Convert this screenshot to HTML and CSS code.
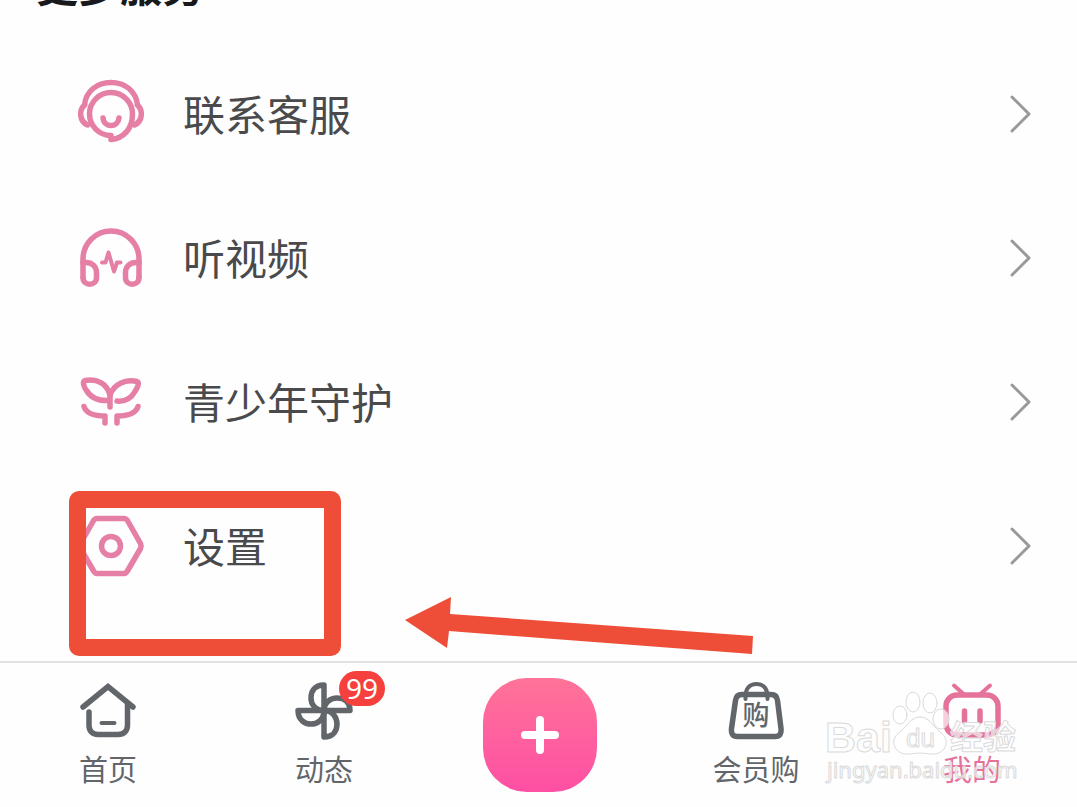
FILE: index.html
```html
<!DOCTYPE html>
<html lang="zh-CN">
<head>
  <meta charset="UTF-8">
  <meta name="viewport" content="width=device-width, initial-scale=1.0">
  <title>我的</title>
  <link rel="stylesheet" href="styles.css">
</head>
<body>
  <main class="services">
    <h2 class="services-title">更多服务</h2>
    <ul class="menu">
      <li class="menu-item">
        <a href="#" class="menu-link">
          <svg class="menu-icon" viewBox="0 0 72 72">
            <path d="M36 61.5v-4a21.5 21.5 0 1 1 21.5-21c0 14-9 24-21.5 25"/>
            <path d="M9.500 27C11 13 22 4.500 36 4.500S61 13 62.500 27"/>
            <path d="M9.500 27C4 32 4 43 12.500 47"/>
            <path d="M62.500 27C68 32 68 43 59.500 47"/>
            <path d="M28 40c1 10 15 10 16 0"/>
          </svg>
          <span class="menu-text">联系客服</span>
          <svg class="chevron" viewBox="0 0 24 40"><path d="M4 3l17 17L4 37"/></svg>
        </a>
      </li>
      <li class="menu-item">
        <a href="#" class="menu-link">
          <svg class="menu-icon" viewBox="0 0 72 72">
            <path d="M8 55V37a28 28 0 0 1 56 0v18"/>
            <path d="M8 40.500h3c6 0 10.500 4 10.500 10v5c0 9-13.500 9-13.500 0"/>
            <path d="M64 40.500h-3c-6 0-10.500 4-10.500 10v5c0 9 13.500 9 13.500 0"/>
            <path d="M27 40.500h3.500l3-10L39 49.500l3-9h3.500" stroke-width="4"/>
          </svg>
          <span class="menu-text">听视频</span>
          <svg class="chevron" viewBox="0 0 24 40"><path d="M4 3l17 17L4 37"/></svg>
        </a>
      </li>
      <li class="menu-item">
        <a href="#" class="menu-link">
          <svg class="menu-icon" viewBox="0 0 72 72">
            <path d="M35 41V29C32 18 22 12 10 14.500c-3 1-1 7 1.500 10C16 32 24 35 34 34.500"/>
            <path d="M35 29c4-11 15-16 27-13.500 3 1 0 7-2 10-4 7-9 10.500-18 9.500"/>
            <path d="M9 40.500C11 47 19 50 30 50v7"/>
            <path d="M63 40.500C61 47 54 50 42 50v7"/>
          </svg>
          <span class="menu-text">青少年守护</span>
          <svg class="chevron" viewBox="0 0 24 40"><path d="M4 3l17 17L4 37"/></svg>
        </a>
      </li>
      <li class="menu-item">
        <a href="#" class="menu-link">
          <svg class="menu-icon" viewBox="0 0 72 72">
            <path d="M22 8.500h27c2 0 3 1 4 3l12.500 22c1 2 1 3 0 5L53 60c-1 2-2 3.500-4 3.500H22c-2 0-3-1.500-4-3.500L5.500 38.500c-1-2-1-3 0-5L18 11.500c1-2 2-3 4-3z"/>
            <circle cx="36" cy="36" r="9.500"/>
          </svg>
          <span class="menu-text">设置</span>
          <svg class="chevron" viewBox="0 0 24 40"><path d="M4 3l17 17L4 37"/></svg>
        </a>
        <div class="mark-box"></div>
        <svg class="mark-arrow" viewBox="0 0 348 58"><path d="M0 23L46 0l-1 17 303 22-1 18L44 34l-2 17z"/></svg>
      </li>
    </ul>
  </main>

  <nav class="tabbar">
    <a href="#" class="tab">
      <svg class="tab-icon" viewBox="0 0 60 60">
        <path d="M5 26L30 5.500 55 26" stroke-linejoin="miter"/>
        <path d="M11 31v13c0 6 3 9.500 9 9.500h20c6 0 9.500-3.500 9.500-9.500V24"/>
        <path d="M23.500 42h13" stroke-width="4"/>
      </svg>
      <span class="tab-text">首页</span>
    </a>
    <a href="#" class="tab">
      <span class="tab-badge-wrap">
        <svg class="tab-icon" viewBox="0 0 60 60">
          <path d="M30 29.500V4C20 4 17 11 17 17s4 12.500 13 12.500z"/>
          <path d="M30 29.500h26C56 20 49 17 43 17s-13 4-13 12.500z"/>
          <path d="M30 29.500V56c10 0 13-7 13-13s-4-13.500-13-13.500z"/>
          <path d="M30 29.500H4C4 39 11 43 17 43s13-4 13-13.500z"/>
        </svg>
        <span class="badge">99</span>
      </span>
      <span class="tab-text">动态</span>
    </a>
    <button type="button" class="add-btn" aria-label="发布">
      <svg viewBox="0 0 40 40"><path d="M20 5v30M5 20h30"/></svg>
    </button>
    <a href="#" class="tab">
      <svg class="tab-icon" viewBox="0 0 60 60">
        <path d="M16 13.500h29c4 0 6 2 6.500 6l3.500 28c.5 5-1 8-6 8H11.500c-5 0-6.500-3-6-8l4-28c.5-4 2.500-6 6.500-6z"/>
        <path d="M19.500 18C19 8 23 3 30.500 3S42 8 41.500 18" stroke-width="4"/>
        <text class="bag-text" x="30" y="44">购</text>
      </svg>
      <span class="tab-text">会员购</span>
    </a>
    <a href="#" class="tab active">
      <svg class="tab-icon" viewBox="0 0 60 60">
        <rect x="4" y="14" width="52" height="40" rx="11"/>
        <path d="M12 4.500l9 8M48 4.500l-9 8" stroke-width="4"/>
        <path d="M22.500 30v10M38 30v10"/>
      </svg>
      <span class="tab-text">我的</span>
    </a>
    <svg class="watermark" viewBox="0 0 205 105">
      <text class="wm-bold" x="5" y="67" font-size="43">Bai</text>
      <path d="M100 32c-9 0-12 8-19 14-8 6-9 12-5 18 6 8 16 4 24 4s18 4 24-4c4-6 3-12-5-18-7-6-10-14-19-14z"/>
      <ellipse cx="80" cy="30" rx="7" ry="9"/>
      <ellipse cx="93" cy="17" rx="7" ry="10"/>
      <ellipse cx="110" cy="18" rx="7" ry="10"/>
      <ellipse cx="121" cy="34" rx="8" ry="10"/>
      <text class="wm-du" x="86" y="62" font-size="26">du</text>
      <text class="wm-bold" x="130" y="64" font-size="33">经验</text>
      <text class="wm-url" x="7" y="93" font-size="22">jingyan.baidu.com</text>
    </svg>
  </nav>
</body>
</html>
```
FILE: styles.css
```css
* {
  box-sizing: border-box;
}

body {
  margin: 0;
  background-color: #fefefe;
  font-family: "Noto Sans CJK SC", sans-serif;
  color: #4a4a4c;
}

a {
  color: inherit;
  text-decoration: none;
}

svg {
  display: block;
  flex: none;
  fill: none;
  stroke-linecap: round;
  stroke-linejoin: round;
}

/* service list, scrolled so that its title is partly cut off */
.services-title {
  margin: -40px 0 34px;
  padding-left: 36px;
  font-size: 42px;
  line-height: 48px;
  font-weight: bold;
  color: #18191c;
}

.menu {
  list-style: none;
  margin: 0;
  padding: 0 0 43px;
}

.menu-item {
  position: relative;
}

.menu-link {
  display: flex;
  align-items: center;
  gap: 36px;
  height: 144px;
  padding: 0 45px 0 75px;
}

.menu-icon {
  width: 72px;
  height: 72px;
  stroke: #e57fa5;
  stroke-width: 5.5;
}

.menu-text {
  flex: 1;
  padding-bottom: 3px;
  font-size: 42px;
  line-height: 60px;
}

.chevron {
  width: 24px;
  height: 40px;
  stroke: #999;
  stroke-width: 3;
}

/* red marks */
.mark-box {
  position: absolute;
  top: 17px;
  left: 69px;
  z-index: 1;
  width: 272px;
  height: 165px;
  border: 17px solid #ee4e38;
  border-radius: 10px;
}

.mark-arrow {
  position: absolute;
  top: 123px;
  left: 405px;
  z-index: 1;
  width: 348px;
  height: 58px;
  fill: #ee4e38;
}

/* bottom bar */
.tabbar {
  position: relative;
  display: flex;
  align-items: center;
  justify-content: space-between;
  padding: 15px 48px 15px 51px;
  border-top: 2px solid #e2e2e2;
}

.tab {
  display: flex;
  flex-direction: column;
  align-items: center;
  gap: 8px;
  width: 114px;
  padding-bottom: 2px;
  color: #62666b;
}

.tab.active {
  color: #e5729b;
}

.tab-icon {
  width: 60px;
  height: 60px;
  stroke: currentColor;
  stroke-width: 5.5;
}

.tab-text {
  font-size: 29px;
  line-height: 38px;
}

.bag-text {
  font-size: 27px;
  font-weight: 500;
  text-anchor: middle;
  fill: currentColor;
  stroke: none;
}

.tab-badge-wrap {
  position: relative;
}

.badge {
  position: absolute;
  top: -10px;
  left: 45px;
  width: 46px;
  height: 35px;
  border-radius: 18px;
  background-color: #f5403d;
  color: #fff;
  font-family: "Noto Sans", sans-serif;
  font-size: 28px;
  line-height: 35px;
  text-align: center;
}

.add-btn {
  display: flex;
  align-items: center;
  justify-content: center;
  width: 114px;
  height: 114px;
  padding: 0;
  border: none;
  border-radius: 44px;
  background: linear-gradient(#ff7398, #fe4fa4);
  cursor: pointer;
}

.add-btn svg {
  width: 40px;
  height: 40px;
  stroke: #fff;
  stroke-width: 8;
}

.watermark {
  position: absolute;
  top: 22px;
  right: 52px;
  width: 205px;
  height: 105px;
  fill: rgba(255, 255, 255, 0.65);
  stroke: #dadada;
  stroke-width: 1;
  pointer-events: none;
}

.wm-bold {
  font-family: "Liberation Sans", "Noto Sans CJK SC", sans-serif;
  font-weight: bold;
}

.wm-du {
  font-family: "Liberation Sans", sans-serif;
}

.wm-url {
  font-family: "Noto Sans", sans-serif;
}
```
